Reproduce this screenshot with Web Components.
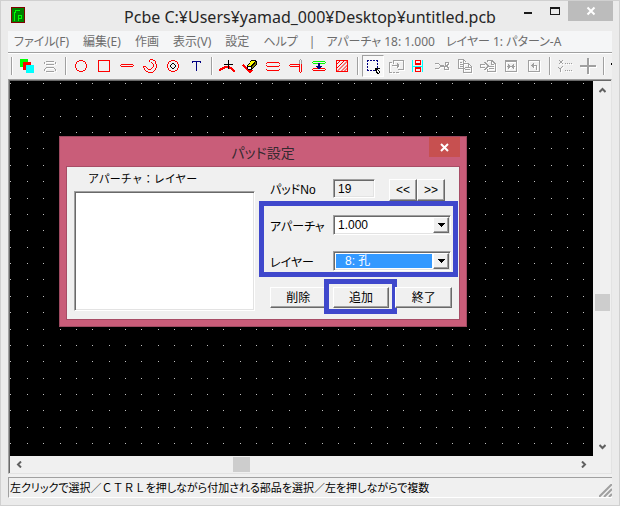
<!DOCTYPE html>
<html lang="ja">
<head>
<meta charset="utf-8">
<title>Pcbe</title>
<style>
body { margin: 0; font-family: "Noto Sans", "Noto Sans CJK JP", sans-serif; }
</style>
</head>
<body>
<pcb-app></pcb-app>
<script>
const define = (name, html, setup) => customElements.define(name, class extends HTMLElement {
  constructor() {
    super();
    const t = document.createElement('template');
    t.innerHTML = html;
    this.attachShadow({ mode: 'open' }).append(t.content.cloneNode(true));
  }
  connectedCallback() { if (setup) setup(this, this.shadowRoot); }
});

define('title-bar', `
<style>
:host { display: grid; grid-template-columns: 1fr auto 1fr; height: 30px; color: #262626; }
.icon { width: 14px; height: 16px; margin: 6px 0 0 10px; }
h1 { margin: 0; font-size: 16px; font-weight: 400; line-height: 32px; white-space: nowrap; }
.controls { display: flex; justify-content: flex-end; align-items: flex-start; padding-right: 6px; }
button { width: 27px; height: 20px; padding: 0; border: 0; background: none; display: grid; place-items: center; }
button.close { width: 45px; background: #bcbcbc; }
svg { display: block; }
</style>
<svg class="icon" viewBox="0 0 14 16" shape-rendering="crispEdges"><path fill="#800000" d="M0 0h14v16H0z"/><path fill="#008000" d="M1 1h12v14H1z"/><path fill="none" stroke="#00ff00" d="M3.500 14V5.500H4.500V3.500H8.500M3 5.500h2M7.500 14V8.500H10.500V11.500H8"/></svg>
<h1><slot></slot></h1>
<div class="controls">
<button aria-label="最小化"><svg width="10" height="10"><path fill="#1a1a1a" d="M1 6h8v2H1z"/></svg></button>
<button aria-label="最大化"><svg width="10" height="10" shape-rendering="crispEdges"><path fill="#1a1a1a" fill-rule="evenodd" d="M0 1h10v8H0zM1 3v5h8V3z"/></svg></button>
<button class="close" aria-label="閉じる"><svg width="10" height="10"><path fill="none" stroke="#fff" stroke-width="2" d="M1.500 1.500l7 7M8.500 1.500l-7 7"/></svg></button>
</div>`);

define('menu-bar', `
<style>
:host { display: flex; align-items: center; gap: 14px; height: 21px; padding-left: 6px; background: #f5f6f7;
  color: #6d6d6d; font-size: 12px; line-height: 20px; white-space: nowrap; overflow: hidden; }
::slotted(button) { all: unset; font-feature-settings: "palt"; }
::slotted(span) { font-feature-settings: "palt"; margin-left: -3px; }
</style><slot></slot>`);

const G = '#a0a0a0';
const gray = (d, w = 1) => `<g fill="none" stroke-width="${w}"><path stroke="#fff" transform="translate(1 1)" d="${d}"/><path stroke="${G}" d="${d}"/></g>`;
const red = d => `<path fill="none" stroke="#f00" d="${d}"/>`;
const icons = {
  layers: `<path fill="#0f0" d="M1 1h8v8H1z"/><path fill="#f00" d="M4 4h8v8H4z"/><path fill="#0ff" d="M7 7h8v8H7z"/>`,
  pads: gray('M4 3.500h8M2.500 4v2M13.500 4v2M4 6.500h8M4 9.500h8M3.500 10v1M12.500 10v1M2.500 11v2M13.500 11v2M4 13.500h8'),
  circle: red('M6 2.500h4M10 3.500h2M12.500 4v2M13.500 6v4M12.500 10v2M12 12.500h-2M10 13.500h-4M6 12.500h-2M3.500 12v-2M2.500 10v-4M3.500 6v-2M4 3.500h2'),
  square: red('M2.500 2.500h11v11h-11z'),
  line: red('M2 6.500h12M1 7.500h1M14 7.500h1M2 8.500h12'),
  arc: red('M8 1.500h3M11 2.500h2M13.500 3v3M14.500 6v4M13.500 10v2M12 12.500h1M11 13.500h1M6 14.500h5M4 13.500h2M3 12.500h1M2.500 10v2M1.500 8v2M2 8.500h2M4.500 9v1M5.500 10v1M6 11.500h3M9 10.500h1M10.500 9v1M11.500 6v3M10.500 5v1M9 4.500h1M7.500 2v2'),
  target: red('M6 2.500h4M10 3.500h2M12.500 4v2M13.500 6v4M12.500 10v2M12 12.500h-2M10 13.500h-4M6 12.500h-2M3.500 12v-2M2.500 10v-4M3.500 6v-2M4 3.500h2') +
    `<path fill="none" stroke="#000" d="M7 5.500h2M6 6.500h1M9 6.500h1M5.500 7v2M10.500 7v2M6 9.500h1M9 9.500h1M7 10.500h2"/>`,
  text: `<path fill="#000080" d="M4 3h9v2h-1V4H9v9H8V4H5v1H4z"/>`,
  vertex: `<path fill="none" stroke="#f00" stroke-width="2" d="M0 12l3-1 3-2 3 0 3 1 4 4"/><path fill="none" stroke="#000" d="M5 6.500h9M9.500 2v9"/>`,
  eraser: `<path fill="none" stroke="#f00" stroke-width="2" d="M1 7l7 7 2-2"/><path d="M9 2h5v1h1v4h-1v1h-1v1h-1v1h-1v1h-1v1H6v-1H5V7h1V6h1V5h1V3h1z"/><path fill="#ff0" d="M9 3h4v1h-1v1h-1v1h-1v1h-1v1H6V7h1V6h1V4h1z"/><path fill="#808000" d="M13 4h1v3h-1v1h-1v1h-1v1h-1V8h1V7h1V6h1z"/><path fill="#fff" d="M6 9h3v2H6z"/>`,
  parallel: red('M2 4.500h12M1 5.500h1M14 5.500h1M2 8.500h12M1 7.500h1M14 7.500h1M2 6.500h12M1 11.500h1M14 11.500h1M2 10.500h12M2 12.500h12').replace('M2 6.500h12', '').replace('M2 10.500h12', ''),
  trim: `<path fill="none" stroke="${G}" d="M11.500 2v4M12 1.500h1M13.500 2v4"/>` + red('M2 6.500h9M1 7.500h1M2 8.500h9M11.500 6v8M13.500 6v8M12 14.500h1'),
  spacing: `<path fill="none" stroke="#0f0" d="M2 3.500h12M1 4.500h1M14 4.500h1M2 5.500h12"/>` + red('M2 10.500h12M1 11.500h1M14 11.500h1M2 12.500h12') + `<path fill="#000080" d="M7 5h2v3h2v1h-1v1H9v1H7v-1H6V9H5V8h2z"/>`,
  hatch: red('M2.500 2.500h11v11h-11z') + `<path shape-rendering="auto" fill="none" stroke="#f00" d="M2 7l5-5M2 11l9-9M3 13.500L13.500 3M7 13.500L13.500 7M10 13.500l3.500-3.500"/>`,
  select: `<path fill="none" stroke="#000080" stroke-dasharray="2 1" d="M2 2.500h11M2 12.500h8M2.500 2v11M12.500 2v8"/><path d="M10 10h5v1h-2v1h1v1h1v2h-1v1h-2v-1h-1v-2h-1z"/><path fill="#fff" d="M12 12h1v1h1v2h-1v-1h-1z"/>`,
  moveInto: gray('M5.500 6V2.500h10v9h-6M1 4.500h3M1.500 5v9M1 14.500h3M5 14.500h2M8 14.500h3M4 7.500h7M9.500 5v5M10.500 6v3'),
  align: `<path fill="none" stroke="#0ff" d="M1.500 2v12M11.500 2v12M2 8h10"/><path fill="#f00" fill-rule="evenodd" d="M4 2h6v5H4zM5 3v2h4V3zM4 9h6v5H4zM5 11v2h4v-2z"/>`,
  cut: gray('M1 5.500h3l3 2h3M1 10.500h3l3-2h3M11 6.500v-2h3v2l-1 1h-2zM10 9.500v2h4v-2l-1-1h-2z'),
  copy: gray('M8 10.500H1.500v-9h5l3 3M6.500 2v3H9M3 4.500h2M3 6.500h3M3 8.500h3M6.500 5.500h5l3 3v6h-8zM11.500 6v3H14M8 9.500h3M8 11.500h5'),
  paste: gray('M0 6.500h5M0 9.500h5M.5 7v2M4.500 4l4 4-4 4M7 3.500V2.500h5l3 3v8H7.500V11M11.500 3v3H14M9 8.500h5M9 10.500h5'),
  flip: gray('M2.500 2.500h11v11h-11zM3 3.500h10M4 8.500h8M5.500 6v5M10.500 6v5M6.500 7v3M9.500 7v3'),
  rotate: gray('M2.500 2.500h11v11h-11zM5 7.500h5.500v4M6.500 6v3M7.500 5v5M10 8.500h1'),
  coords: gray('M2 2l4 4M6 2L2 6M1 9l2 2 3-3M3.500 11v3M8 5.500h1M10 5.500h1M12 5.500h1M14 5.500h1M8 12.500h1M10 12.500h1M12 12.500h1M14 12.500h1'),
  cross: gray('M0 8h16M8 0v16', 2),
  more: `<path d="M0 5h4v2H0z"/>`
};
define('tool-button', `
<style>
:host { display: block; flex: none; width: 23px; }
button { display: grid; place-items: center; box-sizing: border-box; width: 22px; height: 22px; padding: 0; border: 0; background: none; }
:host([pressed]) button { border: 1px solid; border-color: #a0a0a0 #fff #fff #a0a0a0; background: #f8f8f8; }
svg { display: block; overflow: visible; }
</style><button><svg width="16" height="16" viewBox="0 0 16 16" shape-rendering="crispEdges"></svg></button>`,
(el, root) => {
  const n = el.getAttribute('icon');
  root.querySelector('svg').innerHTML = icons[n];
  root.querySelector('button').setAttribute('aria-label', n);
});

define('tool-bar', `
<style>
:host { display: flex; align-items: center; height: 26px; border-top: 1px solid #a0a0a0; box-shadow: inset 0 1px #fff; overflow: hidden; }
::slotted(hr) { flex: none; width: 0; height: 18px; margin: 0 3px; border: 0; border-left: 1px solid #a0a0a0; border-right: 1px solid #fff; }
</style><slot></slot>`);

define('scroll-bar', `
<style>
:host { display: flex; justify-content: space-between; align-items: center; background: #f0f0f0; }
:host([vertical]) { flex-direction: column; }
button { width: 17px; height: 17px; padding: 0; border: 0; background: none; display: grid; place-items: center; }
:host([vertical]) button:last-of-type { transform: rotate(180deg); }
:host(:not([vertical])) button:first-of-type { transform: rotate(-90deg); }
:host(:not([vertical])) button:last-of-type { transform: rotate(90deg); }
.track { flex: 1; display: flex; align-self: stretch; }
:host([vertical]) .track { flex-direction: column; }
.before { flex: var(--before); } .after { flex: var(--after); }
.thumb { width: 17px; flex: 0 0 17px; background: #cdcdcd; }
:host([vertical]) .thumb { width: 15px; align-self: center; }
:host(:not([vertical])) .thumb { height: 15px; align-self: center; }
</style>
<button aria-label="戻る"><svg width="7" height="6"><path fill="none" stroke="#606060" stroke-width="2" d="M.5 5l3-3 3 3"/></svg></button>
<div class="track"><div class="before"></div><div class="thumb"></div><div class="after"></div></div>
<button aria-label="進む"><svg width="7" height="6"><path fill="none" stroke="#606060" stroke-width="2" d="M.5 5l3-3 3 3"/></svg></button>`);

define('pcb-board', `
<style>
:host { display: block; position: relative; overflow: hidden; background: #000; }
svg { position: absolute; inset: 0; width: 100%; height: 100%; }
</style><svg shape-rendering="crispEdges"><path stroke="#c0c0c0"/></svg><slot></slot>`,
(el, root) => {
  const pitch = 16.37;
  let d = '';
  for (let j = 0; j < 70; j++)
    for (let i = 0; i < 130; i++)
      d += `M${Math.ceil(i * pitch)} ${2 + Math.round(j * pitch)}.5h1`;
  root.querySelector('path').setAttribute('d', d);
});

define('push-button', `
<style>
:host { display: block; position: relative; }
button { display: block; box-sizing: border-box; width: 100%; height: 100%; min-height: 21px; padding: 0; border: 1px solid;
  border-color: #fff #696969 #696969 #fff; box-shadow: inset -1px -1px #a0a0a0; background: #f0f0f0; color: #000; font: inherit; line-height: 16px; }
:host([marked])::after { content: ""; position: absolute; inset: -8px -8px -6px -9px; border: 5px solid #3f48cc; pointer-events: none; }
</style><button><slot></slot></button>`);

define('combo-field', `
<style>
:host { display: grid; grid-template-columns: 63px 118px; height: 20px; }
label { line-height: 24px; white-space: nowrap; }
.box { display: flex; box-sizing: border-box; height: 20px; border: 1px solid; border-color: #a0a0a0 #fff #fff #a0a0a0; background: #fff; box-shadow: inset 1px 1px #696969, inset -1px -1px #e3e3e3; padding: 1px; }
select { appearance: none; flex: 1; min-width: 0; margin: 1px; padding: 0 2px; border: 0; border-radius: 0; background: #fff; color: #000; font: inherit; line-height: 14px; outline: 0; }
:host([active]) select { background: #3399ff; color: #fff; padding-left: 9px; }
.arrow { display: grid; place-items: center; width: 14px; border: 1px solid; border-color: #fff #696969 #696969 #fff; background: #f0f0f0; box-shadow: inset -1px -1px #a0a0a0; }
</style><label for="s"></label><div class="box"><select id="s"><option></option></select><span class="arrow"><svg width="7" height="4" shape-rendering="crispEdges"><path d="M0 0h7v1H6v1H5v1H4v1H3V3H2V2H1V1H0z"/></svg></span></div>`,
(el, root) => {
  root.querySelector('label').textContent = el.getAttribute('label');
  root.querySelector('option').textContent = el.getAttribute('value');
});

define('pad-dialog', `
<style>
:host { display: block; box-sizing: border-box; border: 1px solid #9e4a60; background: #c95d79; padding: 0 6px 6px; color: #000; font-size: 12px; font-feature-settings: "palt"; }
header { display: grid; grid-template-columns: 31px 1fr 31px; height: 29px; }
h2 { grid-column: 2; margin: 0; text-align: center; font-size: 14px; font-weight: 400; line-height: 31px; color: #352a30; }
.close { height: 20px; padding: 0; border: 0; background: #c75050; display: grid; place-items: center; }
.body { display: grid; grid-template-columns: 181px 182px; gap: 15px; padding: 5px 7px 8px; border: 1px solid #a84d66; background: #f0f0f0; font-family: "Liberation Sans", "Noto Sans CJK JP", sans-serif; }
.left { display: grid; grid-template-rows: 19px 1fr; }
.left label { padding-left: 14px; font-size: 11px; line-height: 14px; font-feature-settings: normal; }
.list { width: 100%; height: 120px; box-sizing: border-box; border: 1px solid; border-color: #a0a0a0 #fff #fff #a0a0a0; box-shadow: inset 1px 1px #696969, inset -1px -1px #e3e3e3; background: #fff; border-radius: 0; }
.right { display: grid; gap: 16px; padding-top: 7px; align-content: start; }
.number { display: grid; grid-template-columns: 63px 42px 28px 28px; height: 20px; }
.number label { line-height: 22px; }
.number input { box-sizing: border-box; width: 42px; height: 19px; padding: 0 4px; border: 1px solid; border-color: #a0a0a0 #fff #fff #a0a0a0; box-shadow: inset 1px 1px #696969, inset -1px -1px #e3e3e3; background: #f0f0f0; font: inherit; color: #000; border-radius: 0; }
.number .steps { display: grid; grid-template-columns: 28px 28px; margin-left: 14px; width: 56px; }
.combos { position: relative; display: grid; gap: 16px; }
.combos::after { content: ""; position: absolute; inset: -14px -6px -6px -11px; border: 5px solid #3f48cc; pointer-events: none; }
.actions { display: grid; grid-template-columns: repeat(3, 1fr); gap: 6px; }
</style>
<header><h2>パッド設定</h2><button class="close" aria-label="閉じる"><svg width="9" height="9"><path fill="none" stroke="#fff" stroke-width="2" d="M1 1l7 7M8 1l-7 7"/></svg></button></header>
<div class="body">
  <div class="left"><label for="list">アパーチャ：レイヤー</label><select class="list" id="list" size="6"></select></div>
  <div class="right">
    <div class="number"><label for="no">パッドNo</label><input id="no" value="19" readonly><div class="steps"><push-button>&lt;&lt;</push-button><push-button>&gt;&gt;</push-button></div></div>
    <div class="combos"><combo-field label="アパーチャ" value="1.000"></combo-field><combo-field label="レイヤー" value="8: 孔" active></combo-field></div>
    <div class="actions"><push-button>削除</push-button><push-button marked>追加</push-button><push-button>終了</push-button></div>
  </div>
</div>`);

define('status-bar', `
<style>
:host { display: flex; justify-content: space-between; align-items: flex-end; height: 19px; border-top: 1px solid #a0a0a0; border-left: 1px solid #a0a0a0; border-bottom: 1px solid #fff; background: #f0f0f0; color: #000; font-size: 11px; line-height: 18px; white-space: nowrap; font-feature-settings: "palt"; }
div { padding-left: 1px; }
svg { flex: none; }
::slotted(span) { font-feature-settings: normal; }
</style><div><slot></slot></div><svg width="13" height="13"><path fill="none" stroke="#a0a0a0" stroke-width="2" d="M0 13L13 0M5 13l8-8M10 13l3-3"/></svg>`);

define('pcb-app', `
<style>
:host { display: flex; flex-direction: column; box-sizing: border-box; min-height: 100vh; border: 1px solid #d0d0d0; background: #ebebeb; }
.client { flex: 1; display: flex; flex-direction: column; margin: 0 7px 7px; background: #f0f0f0; min-width: 0; }
.view { flex: 1; display: grid; grid-template: 1fr 17px / minmax(0, 1fr) 18px; border: 1px solid; border-color: #a0a0a0 #e3e3e3 #e3e3e3 #a0a0a0; box-shadow: inset 1px 1px #696969; padding: 1px 0 0 1px; margin-bottom: 3px; }
pad-dialog { position: absolute; left: 49px; top: 55px; width: 408px; }
.v { --before: 197; --after: 129; } .h { --before: 206; --after: 327; }
</style>
<title-bar>Pcbe C:¥Users¥yamad_000¥Desktop¥untitled.pcb</title-bar>
<div class="client">
<menu-bar><button>ファイル(F)</button><button>編集(E)</button><button>作画</button><button>表示(V)</button><button>設定</button><button>ヘルプ</button><span>|</span><span>アパーチャ 18: 1.000</span><span>レイヤー 1: パターン-A</span></menu-bar>
<tool-bar></tool-bar>
<div class="view">
<pcb-board><pad-dialog></pad-dialog></pcb-board>
<scroll-bar vertical class="v"></scroll-bar>
<scroll-bar class="h"></scroll-bar>
</div>
<status-bar>左クリックで選択／<span>ＣＴＲＬ</span>を押しながら付加される部品を選択／左を押しながらで複数</status-bar>
</div>`,
(el, root) => {
  root.querySelector('tool-bar').innerHTML =
    '- layers pads - circle square line arc target text - vertex eraser parallel trim spacing hatch - select moveInto align cut copy paste flip rotate - coords cross - more'
      .split(' ').map(n => n === '-' ? '<hr>' : `<tool-button icon="${n}"${n === 'select' ? ' pressed' : ''}></tool-button>`).join('');
});
</script>
</body>
</html>
